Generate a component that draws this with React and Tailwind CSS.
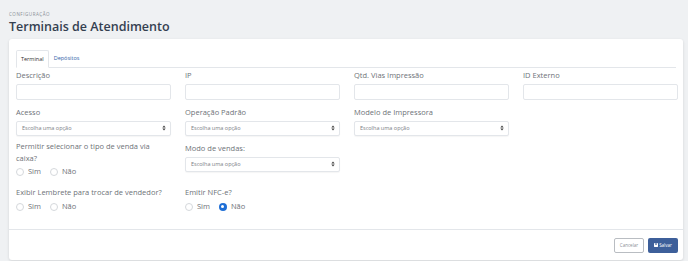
import { useState } from "react";

function Label({ children, className = "" }) {
  return (
    <div className={`text-[7.5px] leading-[12px] text-[#6e7278] ${className}`}>
      {children}
    </div>
  );
}

function TextInput() {
  return <div className="h-[16px] w-full rounded-[2px] border border-[#e3e6ea] bg-white" />;
}

function Select() {
  return (
    <div className="flex h-[15px] w-full items-center justify-between rounded-[2px] border border-[#e3e6ea] bg-white pl-[5px] pr-[4px] shadow-[0_1px_1px_rgba(0,0,0,0.04)]">
      <span className="text-[5.5px] text-[#7a7e85]">Escolha uma opção</span>
      <svg width="4" height="6" viewBox="0 0 4 6">
        <path d="M0.3 2.4 L2 0.6 L3.7 2.4 Z" fill="#444" />
        <path d="M0.3 3.6 L2 5.4 L3.7 3.6 Z" fill="#444" />
      </svg>
    </div>
  );
}

function Radio({ checked, label }) {
  return (
    <label className="flex items-center gap-[4px]">
      {checked ? (
        <span className="flex h-[8px] w-[8px] items-center justify-center rounded-full bg-[#1f6fd6]">
          <span className="h-[3px] w-[3px] rounded-full bg-white" />
        </span>
      ) : (
        <span className="h-[8px] w-[8px] rounded-full border border-[#d5d8dc] bg-white" />
      )}
      <span className="text-[7.5px] text-[#6e7278]">{label}</span>
    </label>
  );
}

function YesNo({ value }) {
  return (
    <div className="flex h-[12px] items-center gap-[9px]">
      <Radio label="Sim" checked={value === "sim"} />
      <Radio label="Não" checked={value === "nao"} />
    </div>
  );
}

export default function App() {
  const [tab, setTab] = useState("terminal");

  return (
    <div
      className="h-[261px] w-[688px] overflow-hidden bg-[#eff1f3] pl-[9px] pr-[5px]"
      style={{ fontFamily: '"Open Sans", "Noto Sans", sans-serif' }}
    >
      <div className="pt-[11px] text-[4.5px] uppercase tracking-[0.12em] text-[#8a8f96]">
        Configuração
      </div>
      <h1 className="mt-[1px] text-[12.5px] font-semibold leading-[16px] text-[#344050]">
        Terminais de Atendimento
      </h1>

      <div className="mt-[4px] rounded-[3px] bg-white shadow-[0_1px_3px_rgba(0,0,0,0.12)]">
        <div className="px-[7px] pb-[16px] pt-[10px]">
          {/* Tabs */}
          <div className="flex items-end border-b border-[#e3e6ea]">
            <button
              onClick={() => setTab("terminal")}
              className="-mb-px h-[18px] rounded-t-[2px] border border-b-white border-[#e3e6ea] px-[4px] text-[5.5px] text-[#333]"
            >
              Terminal
            </button>
            <button
              onClick={() => setTab("depositos")}
              className="h-[18px] px-[5px] text-[5.5px] text-[#2f5fa8]"
            >
              Depósitos
            </button>
          </div>

          {tab === "terminal" && (
            <div className="mr-[-2px]">
              {/* Row 1 */}
              <div className="mt-[1px] grid grid-cols-4 gap-x-[14px]">
                {["Descrição", "IP", "Qtd. Vias Impressão", "ID Externo"].map((l) => (
                  <div key={l}>
                    <Label className="mb-[3px]">{l}</Label>
                    <TextInput />
                  </div>
                ))}
              </div>

              {/* Row 2 */}
              <div className="mt-[6px] grid grid-cols-4 gap-x-[14px]">
                {["Acesso", "Operação Padrão", "Modelo de Impressora"].map((l) => (
                  <div key={l}>
                    <Label className="mb-[3px]">{l}</Label>
                    <Select />
                  </div>
                ))}
              </div>

              {/* Row 3 */}
              <div className="mt-[4px] grid grid-cols-4 gap-x-[14px]">
                <div>
                  <Label>Permitir selecionar o tipo de venda via caixa?</Label>
                  <div className="mt-[2px]">
                    <YesNo />
                  </div>
                </div>
                <div className="pt-[2px]">
                  <Label className="mb-[3px]">Modo de vendas:</Label>
                  <Select />
                </div>
              </div>

              {/* Row 4 */}
              <div className="mt-[8px] grid grid-cols-4 gap-x-[14px]">
                <div>
                  <Label>Exibir Lembrete para trocar de vendedor?</Label>
                  <div className="mt-[3px]">
                    <YesNo />
                  </div>
                </div>
                <div>
                  <Label>Emitir NFC-e?</Label>
                  <div className="mt-[3px]">
                    <YesNo value="nao" />
                  </div>
                </div>
              </div>
            </div>
          )}
        </div>

        {/* Footer */}
        <div className="flex justify-end gap-[4px] border-t border-[#e3e6ea] px-[5px] pb-[7px] pt-[8px]">
          <button className="h-[15px] w-[30px] rounded-[2px] border border-[#b9bdc2] bg-white text-[4.5px] text-[#8a8f96]">
            Cancelar
          </button>
          <button className="flex h-[15px] w-[30px] items-center justify-center gap-[1px] rounded-[2px] bg-[#3d5f9a] text-[4.5px] text-white">
            <svg width="4" height="4" viewBox="0 0 4 4">
              <rect x="0" y="0" width="4" height="4" rx="0.4" fill="white" />
              <rect x="1" y="0.4" width="2" height="1.2" fill="#3d5f9a" />
            </svg>
            Salvar
          </button>
        </div>
      </div>
    </div>
  );
}
